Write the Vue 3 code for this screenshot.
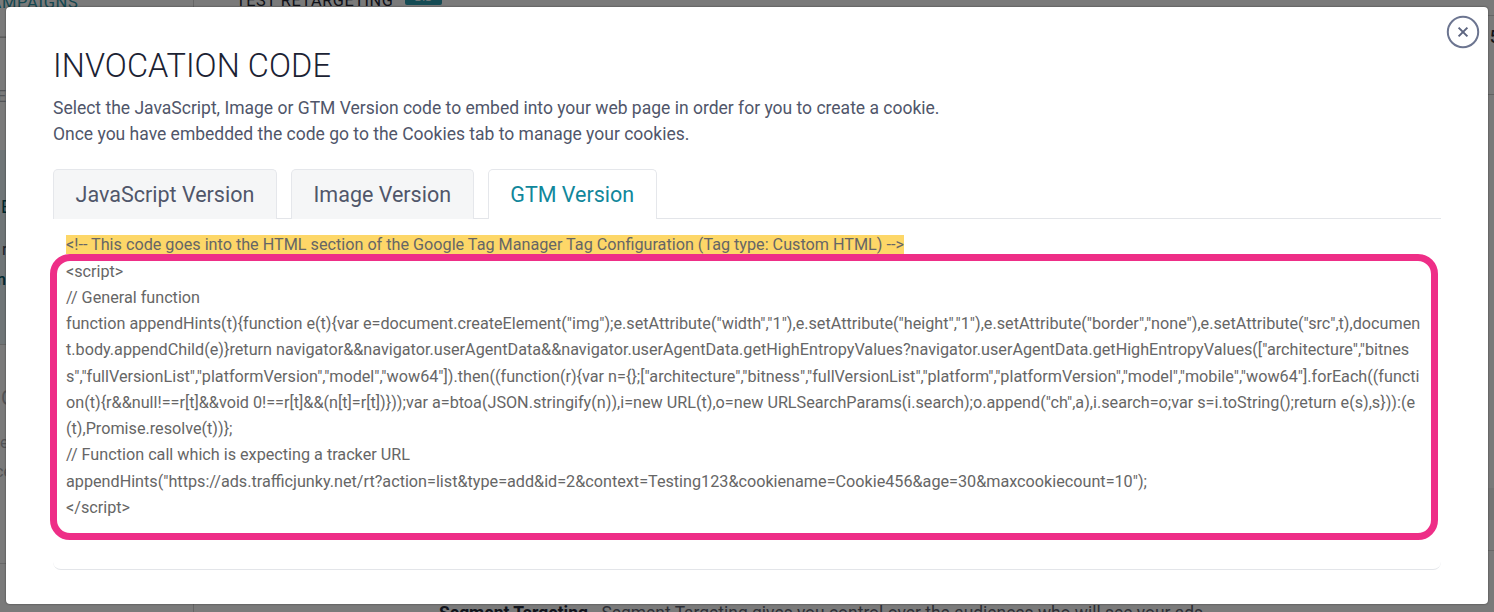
<script setup>
const longCode = `function appendHints(t){function e(t){var e=document.createElement("img");e.setAttribute("width","1"),e.setAttribute("height","1"),e.setAttribute("border","none"),e.setAttribute("src",t),document.body.appendChild(e)}return navigator&&navigator.userAgentData&&navigator.userAgentData.getHighEntropyValues?navigator.userAgentData.getHighEntropyValues(["architecture","bitness","fullVersionList","platformVersion","model","wow64"]).then((function(r){var n={};["architecture","bitness","fullVersionList","platform","platformVersion","model","mobile","wow64"].forEach((function(t){r&&null!==r[t]&&void 0!==r[t]&&(n[t]=r[t])}));var a=btoa(JSON.stringify(n)),i=new URL(t),o=new URLSearchParams(i.search);o.append("ch",a),i.search=o;var s=i.toString();return e(s),s})):(e(t),Promise.resolve(t))};`
const tabs = [
  { label: 'JavaScript Version', active: false },
  { label: 'Image Version', active: false },
  { label: 'GTM Version', active: true },
]
</script>

<template>
  <div class="page">
    <div class="backdrop-page">
      <aside class="side">
        <div class="side-row r1"><span class="camp">CAMPAIGNS</span></div>
        <div class="side-row r2"><span class="frag grey tick">E</span></div>
        <div class="side-row band">
          <span class="frag teal big">E</span>
          <span class="frag plain">r</span>
          <span class="frag teal nn">n</span>
        </div>
        <div class="side-row r4">
          <span class="frag grey gg">G</span>
          <span class="frag grey e">e</span>
          <span class="frag grey ce">ce</span>
        </div>
      </aside>
      <main class="main">
        <div class="head">
          <div class="head-title">
            <span class="test">TEST RETARGETING</span>
            <span class="bid">BID</span>
          </div>
        </div>
        <div class="head2"><span class="five">5</span></div>
        <div class="row-gap"></div>
        <div class="row-band"></div>
        <div class="row-gap2"></div>
        <div class="main-foot">
          <div class="seg"><b>Segment Targeting</b> - Segment Targeting gives you control over the audiences who will see your ads.</div>
        </div>
      </main>
    </div>
    <div class="overlay"></div>

    <section class="modal">
      <button class="close" aria-label="Close">
        <svg width="34" height="34" viewBox="0 0 34 34" fill="none">
          <circle cx="17" cy="17" r="15.2" stroke="#6c7590" stroke-width="2" />
          <path d="M12.6 12.6 21.4 21.4M21.4 12.6 12.6 21.4" stroke="#5d6580" stroke-width="2" />
        </svg>
      </button>
      <h2 class="title">INVOCATION CODE</h2>
      <p class="desc">Select the JavaScript, Image or GTM Version code to embed into your web page in order for you to create a cookie.<br />Once you have embedded the code go to the Cookies tab to manage your cookies.</p>
      <div class="tabs">
        <div v-for="t in tabs" :key="t.label" class="tab" :class="{ active: t.active }">{{ t.label }}</div>
      </div>
      <div class="panel">
        <div class="code">
          <div><span class="hl">&lt;!-- This code goes into the HTML section of the Google Tag Manager Tag Configuration (Tag type: Custom HTML) --&gt;</span></div>
          <div>&lt;script&gt;</div>
          <div>// General function</div>
          <div>{{ longCode }}</div>
          <div>// Function call which is expecting a tracker URL</div>
          <div>appendHints("https://ads.trafficjunky.net/rt?action=list&amp;type=add&amp;id=2&amp;context=Testing123&amp;cookiename=Cookie456&amp;age=30&amp;maxcookiecount=10");</div>
          <div>&lt;/script&gt;</div>
        </div>
        <div class="annotation"></div>
      </div>
    </section>
  </div>
</template>

<style>
html, body { margin: 0; overflow: hidden; }
</style>

<style scoped>
.page {
  position: relative;
  width: 1494px;
  height: 612px;
  overflow: hidden;
  font-family: Roboto, "Liberation Sans", sans-serif;
}
.backdrop-page {
  display: flex;
  height: 612px;
  background: #f4f4f4;
}
.side {
  width: 193px;
  flex: none;
  border-right: 1px solid #ccc;
  display: flex;
  flex-direction: column;
}
.side-row { overflow: hidden; box-sizing: border-box; border-bottom: 1px solid #d0d0d0; }
.r1 { height: 37px; }
.camp { display: block; margin-top: -7px; margin-left: -21px; font-size: 16.5px; line-height: 20px; color: #2a8fa0; letter-spacing: .7px; }
.r2 { height: 113px; border-top: none; border-bottom: none; box-shadow: inset 0 50px 0 -49px #bbb; padding-top: 50px; }
.band { height: 195px; background: #dfeaee; padding-top: 47px; border-bottom: 1px solid #ccc; }
.r4 { height: 219px; padding-top: 43px; }
.frag { display: block; font-size: 16px; line-height: 20px; }
.teal { color: #00505c; }
.big { font-size: 18px; margin-left: 1px; height: 20px; }
.plain { color: #3a3f52; margin-top: 23px; margin-left: 2px; }
.nn { margin-top: 10px; margin-left: -3px; font-weight: 500; }
.grey { color: #a6a8ae; }
.tick { margin-left: -3px; }
.gg { font-size: 20px; margin-left: 1px; }
.e { margin-top: 25px; margin-left: 0; }
.ce { margin-top: 9px; margin-left: -5px; }
.main { flex: 1; display: flex; flex-direction: column; min-width: 0; }
.head { height: 16px; flex: none; box-sizing: border-box; border-bottom: 1px solid #ccc; overflow: hidden; }
.head-title { display: flex; align-items: flex-start; gap: 12px; padding-left: 42px; margin-top: -8px; }
.test { font-size: 16.3px; line-height: 18px; color: #1f2433; letter-spacing: .55px; }
.bid { background: #2a96a8; color: #d8e8ec; font-size: 12px; line-height: 16px; padding: 0 9px; height: 16px; border-radius: 2px; margin-top: -3px; }
.head2 { height: 79px; flex: none; box-sizing: border-box; border-bottom: 1px solid #c4c4c4; display: flex; justify-content: flex-end; overflow: hidden; }
.five { font-size: 18px; font-weight: 500; line-height: 24px; color: #252a38; margin-top: 9px; margin-right: -6px; }
.row-gap { height: 393px; flex: none; }
.row-band { height: 32px; flex: none; background: #e8e8e8; }
.row-gap2 { height: 31px; flex: none; border-bottom: 1px solid #d0d0d0; box-sizing: border-box; }
.main-foot { margin-top: auto; }
.seg { padding-left: 245px; font-size: 17.45px; line-height: 24px; color: #5a5e6c; height: 11px; white-space: nowrap; }
.seg b { font-weight: 700; color: #232838; }
.overlay { position: absolute; inset: 0; background: rgba(0, 0, 0, .5); }

.modal {
  position: absolute;
  left: 6px;
  top: 7px;
  width: 1482px;
  height: 597px;
  box-sizing: border-box;
  padding: 39px 47px 0;
  background: #fff;
  border-radius: 4px;
  box-shadow: 0 0 2px rgba(0, 0, 0, .55);
}
.close {
  position: absolute;
  top: 8px;
  right: 8px;
  width: 34px;
  height: 34px;
  padding: 0;
  border: none;
  background: none;
  display: block;
}
.close svg { display: block; }
.title {
  margin: 0;
  font-size: 32.5px;
  line-height: 40px;
  font-weight: 300;
  color: #1b2233;
  letter-spacing: .07px;
}
.desc {
  margin: 9px 0 0;
  font-size: 17.5px;
  line-height: 26px;
  color: #50566a;
}
.tabs {
  display: flex;
  margin-top: 22px;
  border-bottom: 1px solid #e3e5e9;
  height: 49px;
  gap: 14px;
}
.tab {
  box-sizing: border-box;
  height: 50px;
  padding: 0 21.6px;
  font-size: 21.5px;
  line-height: 50px;
  color: #50566a;
  background: #f5f6f7;
  border: 1px solid #e5e7eb;
  border-bottom: none;
  border-radius: 5px 5px 0 0;
}
.tab.active { background: #fff; color: #11879b; }
.panel {
  position: relative;
  height: 351px;
  box-sizing: border-box;
  border-bottom: 1px solid #e3e5e9;
  border-radius: 0 0 8px 8px;
  padding: 13.4px 17px 0 13px;
}
.code {
  font-size: 16.2px;
  line-height: 26.25px;
  color: #666;
  word-break: break-all;
}
.hl { background: #fdd768; }
.annotation {
  position: absolute;
  left: -3px;
  right: 3px;
  top: 35px;
  height: 286px;
  box-sizing: border-box;
  border: 7px solid #ee2e87;
  border-radius: 20px;
}
</style>
